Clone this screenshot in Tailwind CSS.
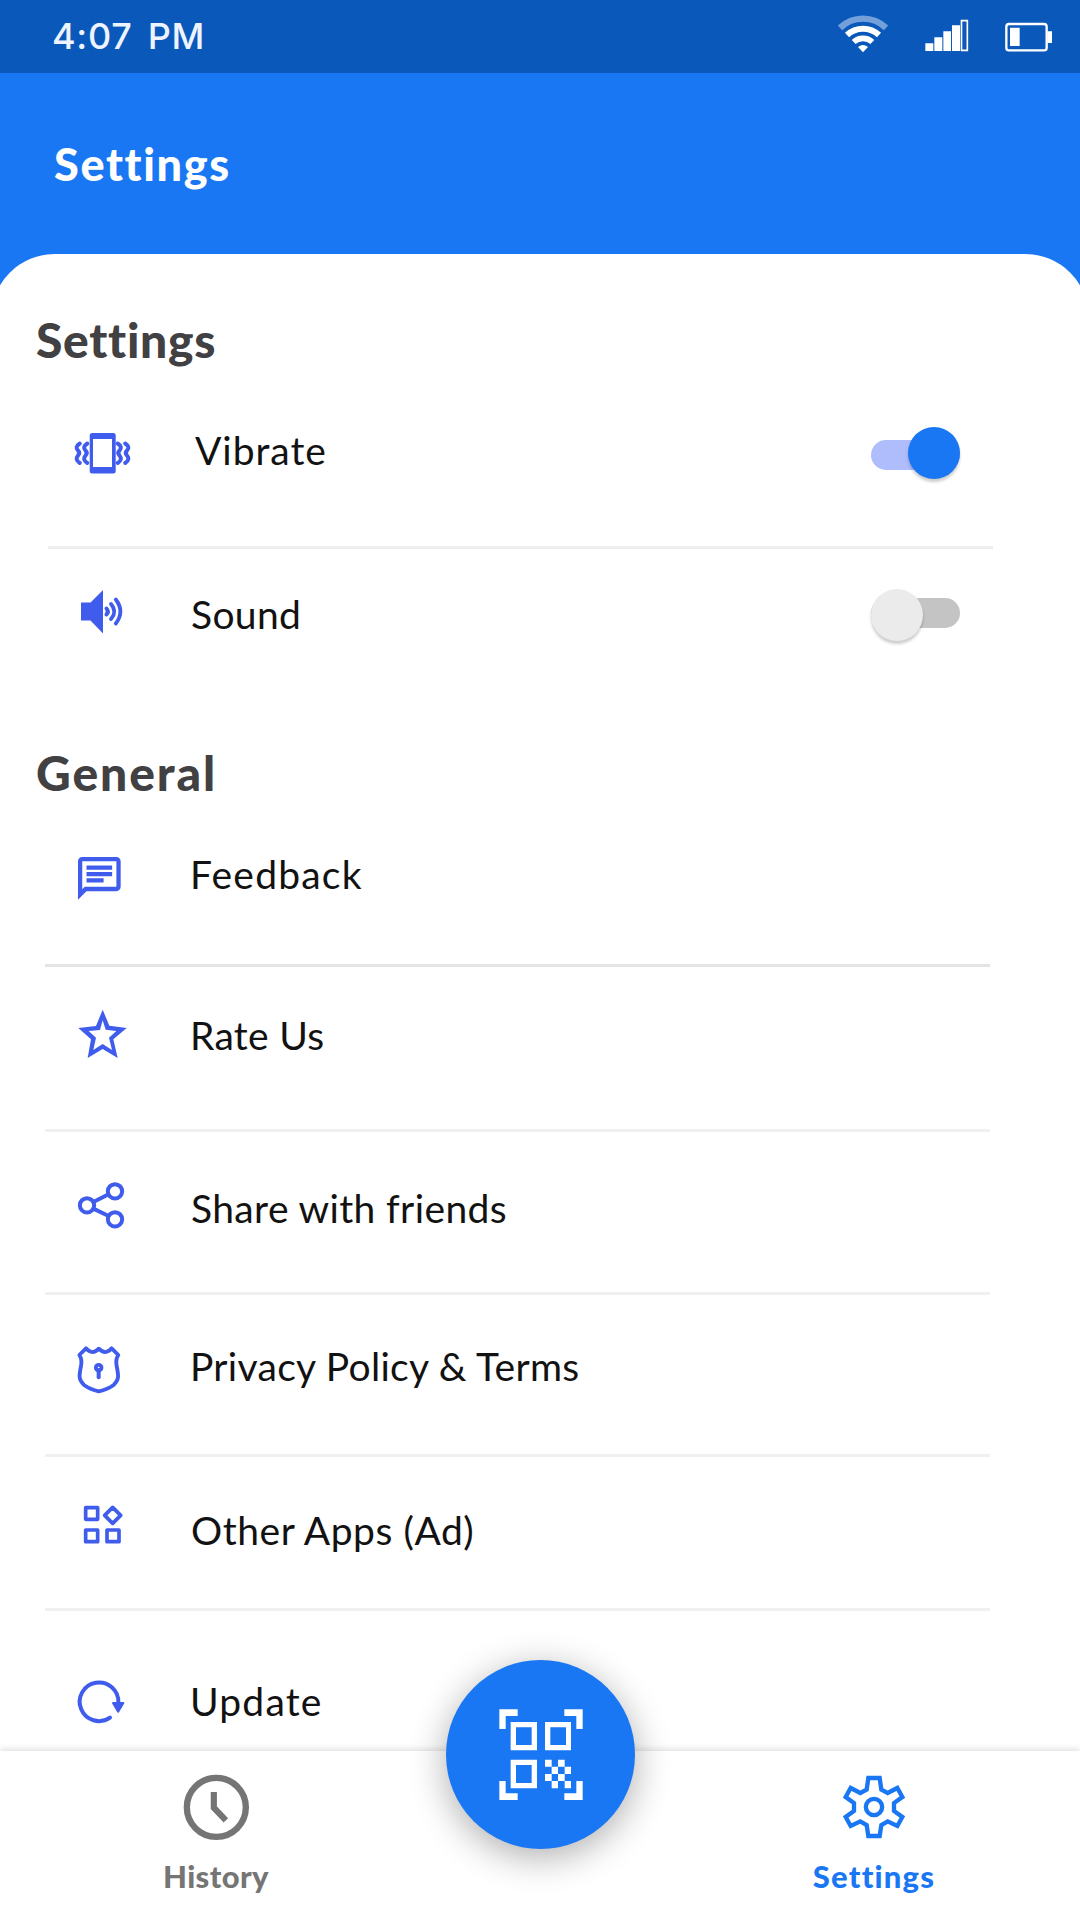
<!DOCTYPE html>
<html lang="en">
<head>
<meta charset="utf-8">
<title>Settings</title>
<script src="https://cdn.jsdelivr.net/npm/@tailwindcss/browser@4"></script>
</head>
<body class="bg-white">
<div class="relative flex h-[1920px] w-[1080px] flex-col overflow-hidden bg-white font-['Lato',sans-serif] text-[#121212]">

  <!-- Status bar -->
  <div class="flex h-[73px] shrink-0 justify-between bg-[#0a58b9] pl-[52px] pr-5">
    <span class="mt-3 font-['Inter',sans-serif] text-[36px] font-medium leading-[48px] tracking-[0.7px] [word-spacing:5px] text-[#eef4ff]">4:07 PM</span>
    <svg class="h-[73px] w-[230px]" viewBox="150 0 690 219" fill="none" stroke="#fff">
      <path d="M180 83.5A100 100 0 0 1 318 83.5" stroke="#739fdb" stroke-width="19"/>
      <path d="M201 105A70 70 0 0 1 297 105" stroke-width="18"/>
      <path d="M221 126A41 41 0 0 1 277 126" stroke-width="17"/>
      <path d="M234 141Q249 129 264 141L249 157z" fill="#fff" stroke="none"/>
      <path d="M436 130h24v23h-24zM463 112h24v41h-24zM490 94h23v59h-23zM516 76h24v77h-24z" fill="#fff" stroke="none"/>
      <path d="M544.500 62h17.500v89h-17.500z" stroke-width="5"/>
      <rect x="679" y="72" width="121" height="79" rx="8" stroke-width="7"/>
      <path d="M690 83h29v55h-29zM802 94h14v35h-14z" fill="#fff" stroke="none"/>
    </svg>
  </div>

  <!-- App bar -->
  <header class="h-[213px] shrink-0 bg-[#1977f3] pl-[54px] pt-[67px]">
    <h1 class="text-[45px] font-black leading-[48px] tracking-[1.65px] text-white">Settings</h1>
  </header>

  <!-- Content sheet -->
  <main class="-mx-[9px] -mt-8 h-[1497px] shrink-0 rounded-t-[64px] bg-white px-[9px] pt-[62px]">
    <h2 class="pl-[36px] text-[48px] font-black leading-[48px] tracking-[0.7px] text-[#414042]">Settings</h2>
    <section class="mt-[36px]">
      <div class="ml-[48px] flex h-[149px] w-[945px] items-start border-b-[3px] border-[#eeeeee]">
        <svg class="ml-[22px] mt-[23px] h-[60px] w-[70px]" viewBox="70 423 70 60" fill="none" stroke="#3f5cec" stroke-width="4" stroke-linecap="round" stroke-linejoin="round">
          <path fill="#3f5cec" stroke="none" fill-rule="evenodd" d="M92.200 433h21a2.500 2.500 0 0 1 2.500 2.500v35.500a2.500 2.500 0 0 1-2.500 2.500h-21a2.500 2.500 0 0 1-2.500-2.500v-35.500a2.500 2.500 0 0 1 2.500-2.500zM93 439v28h19v-28z"/>
          <path d="M79.800 443.500Q74.500 447 78 450.500Q80.500 453 78 455.500Q74.500 459.500 79.800 463M87.300 443.500Q82 447 85.500 450.500Q88 453 85.500 455.500Q82 459.500 87.300 463M117.700 443.500Q123 447 119.500 450.500Q117 453 119.500 455.500Q123 459.500 117.700 463M125.200 443.500Q130.500 447 127 450.500Q124.500 453 127 455.500Q130.500 459.500 125.200 463"/>
        </svg>
        <span class="ml-[55px] mt-[26px] text-[39px] leading-[48px] tracking-[0.97px]">Vibrate</span>
        <div class="ml-auto mr-[33px] mt-[27px] grid h-[52px] w-[89px]">
          <div class="col-start-1 row-start-1 mt-[13px] h-[30px] rounded-full bg-[#b0bdfd]"></div>
          <div class="col-start-1 row-start-1 size-[52px] justify-self-end rounded-full bg-[#1977f3] shadow-[0_3px_3px_rgba(0,0,0,0.2)]"></div>
        </div>
      </div>
      <div class="ml-[48px] flex h-[141px] w-[945px] items-start">
        <svg class="ml-[22px] mt-[33px] h-[60px] w-[70px]" viewBox="70 582 70 60" fill="none" stroke="#3f5cec" stroke-width="3.800" stroke-linecap="round">
          <path fill="#3f5cec" stroke="none" d="M81 602.500h9.500L103 590v43.500L90.500 620.500H81z"/>
          <path stroke-width="4" d="M106.500 608.500Q109.200 611.500 106.500 614.500"/>
          <path d="M111 604Q117.500 611.500 111 619M115.800 599.500Q125 611.500 115.800 623.500"/>
        </svg>
        <span class="ml-[51px] mt-[41px] text-[39px] leading-[48px] tracking-[0.35px]">Sound</span>
        <div class="ml-auto mr-[33px] mt-[40px] grid h-[52px] w-[89px]">
          <div class="col-start-1 row-start-1 mt-[9px] h-[30px] rounded-full bg-[#c4c4c4]"></div>
          <div class="col-start-1 row-start-1 size-[52px] rounded-full bg-[#ebebeb] shadow-[0_3px_3px_rgba(0,0,0,0.2)]"></div>
        </div>
      </div>
    </section>

    <h2 class="mt-[59px] pl-[36px] text-[48px] font-black leading-[48px] tracking-[1.9px] text-[#414042]">General</h2>
    <section class="mt-[13px]">
      <div class="ml-[45px] flex h-[157px] w-[945px] items-start border-b-[3px] border-[#e4e4e4]">
        <svg class="ml-[25px] mt-[38px] h-[60px] w-[70px]" viewBox="70 848 70 60" fill="#3f5cec">
          <path transform="translate(73.700 852.700) scale(2.135)" d="M4 4h16v12H5.170L4 17.170V4m0-2c-1.100 0-1.990.9-1.990 2L2 22l4-4h14c1.100 0 2-.9 2-2V4c0-1.100-.9-2-2-2H4zm2 10h8v2H6v-2zm0-3h12v2H6V9zm0-3h12v2H6V6z"/>
        </svg>
        <span class="ml-[50px] mt-[40px] text-[39px] leading-[48px] tracking-[1.2px]">Feedback</span>
      </div>
      <div class="ml-[45px] flex h-[165px] w-[945px] items-start border-b-[3px] border-[#f0f0f0]">
        <svg class="ml-[25px] mt-[36px] h-[60px] w-[70px]" viewBox="210 819 210 180" fill="#3f5cec">
          <path fill-rule="evenodd" d="M308 839L328 887L380 894L340 928L353 984L308 957L263 984L273 928L235 894L288 888zM308 871L300 900L266 903L288 923L280 960L308 942L336 960L327 923L349 903L317 899z"/>
        </svg>
        <span class="ml-[50px] mt-[44px] text-[39px] leading-[48px] tracking-[0.3px]">Rate Us</span>
      </div>
      <div class="ml-[45px] flex h-[163px] w-[945px] items-start border-b-[3px] border-[#f0f0f0]">
        <svg class="ml-[25px] mt-[43px] h-[60px] w-[70px]" viewBox="90 165 210 180" fill="none" stroke="#3f5cec" stroke-width="12">
          <circle cx="141" cy="256" r="21.500"/><circle cx="225" cy="214" r="21.500"/><circle cx="225" cy="298" r="21.500"/>
          <path d="M160 246L206 223M160 266L206 288"/>
        </svg>
        <span class="ml-[51px] mt-[52px] text-[39px] leading-[48px] tracking-[0.38px]">Share with friends</span>
      </div>
      <div class="ml-[45px] flex h-[162px] w-[945px] items-start border-b-[3px] border-[#f0f0f0]">
        <svg class="ml-[25px] mt-[43px] h-[60px] w-[70px]" viewBox="90 654 210 180" fill="none" stroke="#3f5cec" stroke-width="11.500" stroke-linejoin="round" stroke-linecap="round">
          <path d="M118 705L138 685Q157 707 176.500 686Q196 707 215 685L235 705Q226 718 230 738C236 768 238 778 221 795Q203 808 176.500 814Q150 808 132 795C115 778 117 768 123 738Q127 718 118 705z"/>
          <circle cx="176" cy="743" r="8.500"/><path d="M176 750v22" stroke-width="12"/>
        </svg>
        <span class="ml-[50px] mt-[47px] text-[39px] leading-[48px] tracking-[0.3px]">Privacy Policy &amp; Terms</span>
      </div>
      <div class="ml-[45px] flex h-[154px] w-[945px] items-start border-b-[3px] border-[#f0f0f0]">
        <svg class="ml-[25px] mt-[38px] h-[60px] w-[70px]" viewBox="90 285 210 180" fill="none" stroke="#3f5cec" stroke-width="11" stroke-linejoin="round">
          <path d="M137 323h36v35h-36zM137 390h36v35h-36zM201 390h36v35h-36zM218 322L242 346L218 370L194 346z"/>
        </svg>
        <span class="ml-[51px] mt-[49px] text-[39px] leading-[48px] tracking-[0.55px]">Other Apps (Ad)</span>
      </div>
      <div class="ml-[45px] flex h-[140px] w-[945px] items-start">
        <svg class="ml-[25px] mt-[59px] h-[60px] w-[70px]" viewBox="90 810 210 180" fill="none" stroke="#3f5cec" stroke-width="12" stroke-linecap="round">
          <path d="M210 953A58 58 0 1 1 235 908"/>
          <path d="M219 909h31l-15.500 26z" fill="#3f5cec" stroke-width="6" stroke-linejoin="round"/>
        </svg>
        <span class="ml-[50px] mt-[66px] text-[39px] leading-[48px] tracking-[1.2px]">Update</span>
      </div>
    </section>
  </main>

  <!-- Bottom navigation -->
  <nav class="relative flex h-[169px] shrink-0 justify-between bg-white text-[31px] font-black leading-[32px] shadow-[0_-2px_6px_rgba(0,0,0,0.12)]">
    <div class="flex w-[432px] flex-col items-center pt-[23px] text-[#757575]">
      <svg class="size-[66px]" viewBox="129.500 102 198 198" fill="none" stroke="#757575">
        <circle cx="229.500" cy="202" r="88.500" stroke-width="19"/>
        <path d="M222 156v47l36 38" stroke-width="18.500"/>
      </svg>
      <span class="mt-5 tracking-[0.4px]">History</span>
    </div>
    <div class="flex w-[412px] flex-col items-center pt-[23px] text-[#1977f3]">
      <svg class="size-[66px]" viewBox="183 102 198 198" fill="none" stroke="#1977f3" stroke-width="13">
        <path d="M265 114h34L304 149L323 159L352 144L367 171L342 189V213L367 231L352 258L323 244L304 255L299 288H265L260 255L241 244L212 258L197 231L222 213V189L197 171L212 144L241 159L260 149z"/>
        <circle cx="282" cy="201" r="24.500"/>
      </svg>
      <span class="mt-5 tracking-[1.2px]">Settings</span>
    </div>
  </nav>

  <!-- Scan button -->
  <button class="absolute left-[446px] top-[1660px] size-[189px] rounded-full bg-[#1977f3] shadow-[0_8px_36px_rgba(0,0,0,0.32)]">
    <svg class="size-full" viewBox="78 90 567 567" fill="#fff">
      <path d="M238 238h55v20h-36v39h-19zM433 238h55v59h-19v-39h-36zM238 453h19v37h36v20h-55zM488 453h-19v37h-36v20h55z"/>
      <path fill-rule="evenodd" d="M272 276h79v85h-79zM288 292v53h47v-53zM375 276h78v85h-78zM391 292v53h47v-53zM272 389h79v86h-79zM288 405v54h47v-54z"/>
      <path d="M375 389h20v21h-20zM414 389h20v21h-20zM395 410h19v22h-19zM434 410h19v22h-19zM375 432h20v21h-20zM414 432h20v21h-20zM395 453h19v22h-19zM434 453h19v22h-19z"/>
    </svg>
  </button>
</div>
</body>
</html>
